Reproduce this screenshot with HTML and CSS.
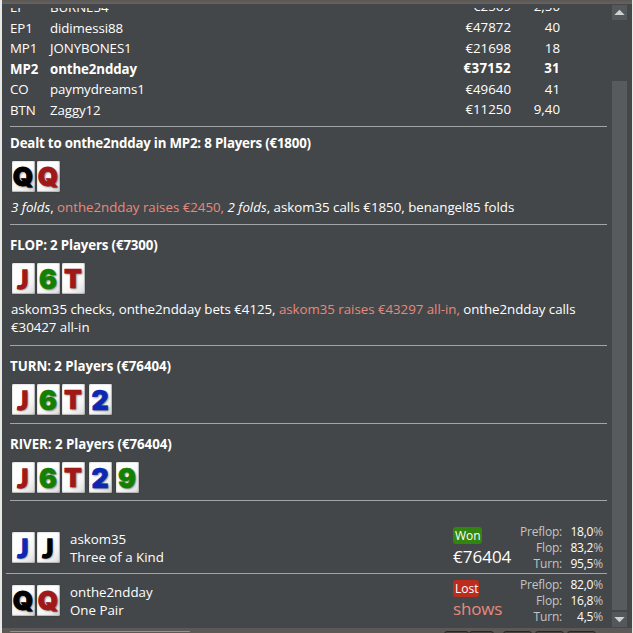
FILE: index.html
```html
<!DOCTYPE html>
<html lang="en">
<head>
<meta charset="utf-8">
<title>Hand history</title>
<link rel="stylesheet" href="styles.css">
</head>
<body>
<div class="window">
  <div class="topbar"></div>
  <main class="panel">
    <div class="content">
      <div class="seats">
        <div class="seat"><span>EP</span><span>BURNE54</span><span class="num">€2569</span><span class="num">2,50</span></div>
        <div class="seat"><span>EP1</span><span>didimessi88</span><span class="num">€47872</span><span class="num">40</span></div>
        <div class="seat"><span>MP1</span><span>JONYBONES1</span><span class="num">€21698</span><span class="num">18</span></div>
        <div class="seat hero"><span>MP2</span><span>onthe2ndday</span><span class="num">€37152</span><span class="num">31</span></div>
        <div class="seat"><span>CO</span><span>paymydreams1</span><span class="num">€49640</span><span class="num">41</span></div>
        <div class="seat"><span>BTN</span><span>Zaggy12</span><span class="num">€11250</span><span class="num">9,40</span></div>
      </div>
      <section class="street preflop">
        <h2>Dealt to onthe2ndday in MP2: 8 Players (€1800)</h2>
        <div class="cards"><b class="card black wide">Q</b><b class="card red wide">Q</b></div>
        <p><i>3 folds</i>, <em>onthe2ndday raises €2450,</em> <i>2 folds</i>, askom35 calls €1850, benangel85 folds</p>
      </section>
      <section class="street flop">
        <h2>FLOP: 2 Players (€7300)</h2>
        <div class="cards"><b class="card red jack">J</b><b class="card green">6</b><b class="card red ten">T</b></div>
        <p class="long">askom35 checks, onthe2ndday bets €4125, <em>askom35 raises €43297 all-in,</em> onthe2ndday calls<br>€30427 all-in</p>
      </section>
      <section class="street turn">
        <h2>TURN: 2 Players (€76404)</h2>
        <div class="cards"><b class="card red jack">J</b><b class="card green">6</b><b class="card red ten">T</b><b class="card blue dealt">2</b></div>
      </section>
      <section class="street river">
        <h2>RIVER: 2 Players (€76404)</h2>
        <div class="cards"><b class="card red jack">J</b><b class="card green">6</b><b class="card red ten">T</b><b class="card blue dealt">2</b><b class="card green dealt">9</b></div>
      </section>
      <section class="result first">
        <div class="cards"><b class="card blue jack">J</b><b class="card black jack">J</b></div>
        <div class="who">askom35<br>Three of a Kind</div>
        <div class="outcome"><span class="tag won">Won</span><div class="amount">€76404</div></div>
        <div class="odds"><span>Preflop:</span><span><b>18,0</b>%</span><span>Flop:</span><span><b>83,2</b>%</span><span>Turn:</span><span><b>95,5</b>%</span></div>
      </section>
      <section class="result second">
        <div class="cards"><b class="card black wide">Q</b><b class="card red wide">Q</b></div>
        <div class="who">onthe2ndday<br>One Pair</div>
        <div class="outcome"><span class="tag lost">Lost</span><div class="amount shows">shows</div></div>
        <div class="odds"><span>Preflop:</span><span><b>82,0</b>%</span><span>Flop:</span><span><b>16,8</b>%</span><span>Turn:</span><span><b>4,5</b>%</span></div>
      </section>
    </div>
    <div class="scrollbar">
      <div class="arrow"><svg width="15" height="15" viewBox="0 0 15 15"><path d="M2.3 10 L7.5 4.8 L12.7 10Z" fill="#d0d1d1"/></svg></div>
      <div class="track"></div>
      <div class="thumb"></div>
      <div class="arrow"><svg width="15" height="15" viewBox="0 0 15 15"><path d="M2.3 5 L7.5 10.2 L12.7 5Z" fill="#d0d1d1"/></svg></div>
    </div>
  </main>
  <footer class="bottombar"><div class="field"></div><div class="keys"><i></i><i></i></div><i class="key"></i><i class="key"></i><i class="key"></i></footer>
</div>
</body>
</html>
```
FILE: styles.css
```css
* { box-sizing: border-box; }
body {
  margin: 0;
  background: #e9e9e6;
  color: #fff;
  font: 13.3px/18px "Open Sans", "Noto Sans", sans-serif;
}
.window {
  height: 633px;
  margin: 0 1px 0 2px;
  overflow: hidden;
  display: flex;
  flex-direction: column;
  background: #444749;
}
.topbar { flex: none; height: 4px; background: linear-gradient(#5b5754, #666361); }
.panel { height: 624px; display: flex; overflow: hidden; }
.content { width: 605px; height: 624px; padding: 4px 0 0 8px; overflow: hidden; white-space: nowrap; }

.seats { height: 119px; border-bottom: 1px solid #a3a4a5; overflow: hidden; }
.seat {
  display: grid;
  grid-template-columns: 40px 361px 100px 49px;
  height: 20.6px;
  line-height: 20.6px;
  letter-spacing: -0.1px;
}
.seat:first-child { margin-top: -11.1px; }
.num { margin-top: -0.6px; text-align: right; letter-spacing: 0; }
.hero { font-weight: 700; }
.hero .num { letter-spacing: 0.3px; }

.street { border-bottom: 1px solid #a3a4a5; overflow: hidden; }
.preflop { height: 98px; padding-top: 7px; }
.flop { height: 121px; padding-top: 11px; }
.turn { height: 78px; padding-top: 11px; }
.river { height: 77px; padding-top: 11px; }
h2 { margin: 0; font-size: 13.3px; line-height: 18px; font-weight: 700; letter-spacing: -0.2px; }
.flop h2 { letter-spacing: -0.15px; }
.turn h2, .river h2 { letter-spacing: -0.05px; }
p { margin: 6px 0 0 1px; letter-spacing: -0.01px; }
.long { letter-spacing: -0.035px; }
em { font-style: normal; color: #e68a7d; }

.cards { display: flex; gap: 2px; margin: 9px 0 0 1.5px; }
.card {
  display: flex;
  justify-content: center;
  width: 23px;
  height: 31px;
  border-radius: 2px;
  background: linear-gradient(135deg, #fff 35%, #f4f4f4 70%, #d9d9d9);
  box-shadow: inset -1px -1px 1px #b5b5b5, inset 1px 1px 1px #e5e5e5, 0 0 1px #222;
  font: 900 26.5px/32px Inter, sans-serif;
  -webkit-text-stroke: 0.6px currentColor;
  text-shadow: 1px 1px 2px rgba(0, 0, 0, .5);
}
.wide { font-size: 26px; -webkit-text-stroke-width: 0.8px; }
.jack { font-family: Lato, Inter, sans-serif; -webkit-text-stroke-width: 1.3px; }
.ten { font-size: 26px; }
.dealt { margin-left: 2px; }
.red { color: #a01818; }
.green { color: #128000; }
.blue { color: #0a28b4; }
.black { color: #000; }

.result { display: grid; grid-template-columns: 60px 382px 62px 89px; }
.result .cards { margin-top: 0; align-self: start; }
.first { height: 73px; margin-left: -4px; padding: 31px 0 0 4px; border-bottom: 1px solid #a3a4a5; }
.second { height: 54px; padding-top: 11px; }
.who { margin-top: -2px; line-height: 18px; letter-spacing: 0; }
.outcome { margin-top: -5px; padding-left: 1px; }
.tag { display: block; width: 29px; height: 17px; border-radius: 3px; padding-left: 2px; font-size: 12px; line-height: 18px; }
.won { background: #32850e; }
.lost { width: 26px; background: #bd2b1c; }
.amount { font-size: 17px; line-height: 25px; }
.shows { line-height: 24px; color: #e68a7d; letter-spacing: -0.2px; }
.odds {
  display: grid;
  grid-template-columns: 48px 41px;
  grid-auto-rows: 16px;
  margin-top: -8px;
  text-align: right;
  font-size: 12px;
  line-height: 16px;
  letter-spacing: -0.2px;
  color: #c3c4c5;
}
.odds b { font-weight: 400; color: #fff; }

.scrollbar { width: 15px; margin: 1px 0 0 5px; height: 622px; display: flex; flex-direction: column; }
.arrow { height: 15px; background: #54585a; }
.arrow svg { display: block; }
.track { height: 61px; }
.thumb { height: 529px; margin-bottom: 2px; background: #575b5e; }

.bottombar { height: 5px; background: #5d5855; display: flex; padding: 3px 6px 0 8px; }
.field { width: 180px; border-top: 1px solid #96918d; }
.keys { display: flex; width: 50px; margin: 0 9px 0 254px; }
.keys i, .key { height: 8px; border: 1px solid #282727; border-radius: 3px 3px 0 0; background: #484544; }
.keys i { flex: 1; }
.key { width: 29px; margin-right: 3px; }
```
